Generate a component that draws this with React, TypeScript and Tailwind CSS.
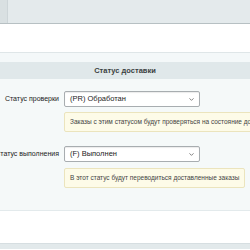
import { ChevronDown } from "lucide-react"

const font = { fontFamily: '"Liberation Sans", Arial, sans-serif' }

function StatusSelect({ value }: { value: string }) {
  return (
    <div className="flex h-[16px] w-[136px] items-center justify-between rounded-[2px] border border-[#a8adb0] bg-white pl-[5px] pr-[4px] shadow-[inset_0_1px_1px_rgba(0,0,0,0.08)]">
      <span className="text-[7.5px] text-[#222]">{value}</span>
      <ChevronDown className="h-[7px] w-[7px] text-[#555]" strokeWidth={2.5} />
    </div>
  )
}

function Note({ text, wide }: { text: string; wide?: boolean }) {
  return (
    <div
      className={`ml-[64px] flex h-[20px] items-center whitespace-nowrap rounded-[2px] border border-[#ebe4bd] bg-[#fdfbe8] pl-[5px] pr-[5px] text-[6.5px] text-[#444] ${
        wide ? "w-[230px] overflow-hidden" : "w-fit"
      }`}
    >
      {text}
    </div>
  )
}

export default function App() {
  return (
    <div className="h-[250px] w-[250px] overflow-hidden bg-white" style={font}>
      {/* tab bar */}
      <div className="flex h-[24px] border-b border-[#b7c0c3] bg-[#e4eaec]">
        <div className="w-[8px] border-r border-[#cdd5d8] bg-[#d9e0e2]" />
      </div>

      <div className="h-[28px] bg-white" />

      <div className="h-[10px] border-t border-[#dfe6e8] bg-[#f4f8f9]" />

      {/* section header */}
      <div className="flex h-[17px] items-center justify-center bg-[#e0e8ea] text-[7.5px] font-bold text-[#3a3f41]">
        Статус доставки
      </div>

      {/* form */}
      <div className="flex h-[131px] flex-col overflow-hidden bg-[#f5f9f9] pt-[12px]">
        <div className="flex items-center">
          <div className="w-[61px] shrink-0 whitespace-nowrap pr-[2px] text-right text-[7px] text-[#222]">
            Статус проверки
          </div>
          <div className="ml-[3px]">
            <StatusSelect value="(PR) Обработан" />
          </div>
        </div>
        <div className="mt-[5px]">
          <Note wide text="Заказы с этим статусом будут проверяться на состояние доставки" />
        </div>

        <div className="mt-[14px] flex items-center">
          <div className="flex w-[61px] shrink-0 justify-end overflow-hidden whitespace-nowrap pr-[2px] text-[7px] text-[#222]">
            Статус выполнения
          </div>
          <div className="ml-[3px]">
            <StatusSelect value="(F) Выполнен" />
          </div>
        </div>
        <div className="mt-[6px]">
          <Note text="В этот статус будут переводиться доставленные заказы" />
        </div>
      </div>

      <div className="h-[33px] border-t border-[#e3eaec] bg-white" />

      <div className="h-[6px] border-t border-[#d6dee1] bg-[#e2e9eb]" />
    </div>
  )
}
